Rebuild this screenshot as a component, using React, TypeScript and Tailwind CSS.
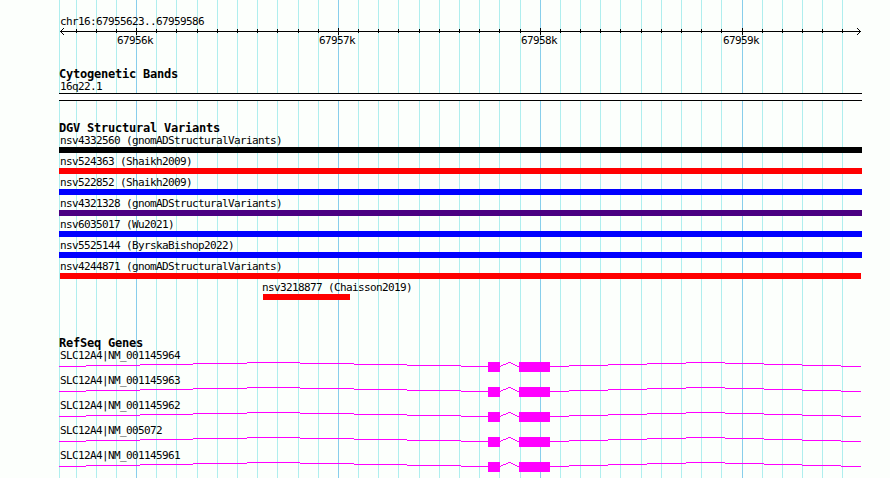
import React from "react";

const MINOR = [59, 76, 96, 116, 156, 176, 197, 217, 237, 257, 277, 298, 318, 358, 378, 398, 419, 439, 459, 479, 499, 520, 560, 580, 600, 620, 641, 661, 681, 701, 721, 762, 782, 802, 822, 842];
const MAJOR = [
  { x: 136, label: "67956k" },
  { x: 338, label: "67957k" },
  { x: 540, label: "67958k" },
  { x: 742, label: "67959k" },
];

const VARIANTS = [
  { name: "nsv4332560 (gnomADStructuralVariants)", fill: "#000000", start: 59, end: 862, text: 60 },
  { name: "nsv524363 (Shaikh2009)", fill: "#ff0000", start: 59, end: 862, text: 60 },
  { name: "nsv522852 (Shaikh2009)", fill: "#0000ff", start: 59, end: 862, text: 60 },
  { name: "nsv4321328 (gnomADStructuralVariants)", fill: "#4b0082", start: 59, end: 862, text: 60 },
  { name: "nsv6035017 (Wu2021)", fill: "#0000ff", start: 59, end: 862, text: 60 },
  { name: "nsv5525144 (ByrskaBishop2022)", fill: "#0000ff", start: 59, end: 862, text: 60 },
  { name: "nsv4244871 (gnomADStructuralVariants)", fill: "#ff0000", start: 60, end: 861, text: 60 },
  { name: "nsv3218877 (Chaisson2019)", fill: "#ff0000", start: 263, end: 350, text: 262 },
];

const GENES = ["NM_001145964", "NM_001145963", "NM_001145962", "NM_005072", "NM_001145961"];

// Intron segments as [start, end, row], row 0 being the peak of the arc.
const INTRONS = [
  [59, 86, 4], [86, 140, 3], [140, 193, 2], [193, 247, 1], [247, 300, 0],
  [300, 354, 1], [354, 407, 2], [407, 461, 3], [461, 488, 4],
  [500, 501, 4], [501, 503, 3], [503, 506, 2], [506, 508, 1], [508, 511, 0],
  [511, 513, 1], [513, 515, 2], [515, 517, 3], [517, 519, 4],
  [550, 569, 4], [569, 608, 3], [608, 647, 2], [647, 686, 1], [686, 725, 0],
  [725, 764, 1], [764, 802, 2], [802, 841, 3], [841, 861, 4],
];

const MONO = "font-['DejaVu_Sans_Mono',monospace] whitespace-pre text-black";

function Label({ x = 60, children }: { x?: number; children: React.ReactNode }) {
  return (
    <div className={`${MONO} h-3 text-[11px] leading-[14px] tracking-[-0.622px]`} style={{ paddingLeft: x }}>
      {children}
    </div>
  );
}

function Heading({ children }: { children: React.ReactNode }) {
  return (
    <h2 className={`${MONO} h-3 pl-[59px] text-[12px] font-bold leading-[13px] tracking-[-0.224px]`}>
      {children}
    </h2>
  );
}

function Grid() {
  return (
    <svg className="absolute inset-0" width="890" height="478" shapeRendering="crispEdges">
      {MINOR.map((x) => <rect key={x} x={x} y="0" width="1" height="478" fill="#afeeee" />)}
      {MAJOR.map(({ x }) => <rect key={x} x={x} y="0" width="1" height="478" fill="#87ceeb" />)}
    </svg>
  );
}

function Axis() {
  return (
    <svg className="block" width="890" height="8" shapeRendering="crispEdges">
      <rect x="60" y="4" width="801" height="1" />
      {MINOR.slice(1).map((x) => <rect key={x} x={x} y="2" width="1" height="4" />)}
      {MAJOR.map(({ x }) => <rect key={x} x={x} y="1" width="1" height="7" />)}
      {[1, 2, 3].map((d) => (
        <g key={d}>
          <rect x={60 + d} y={4 - d} width="1" height="1" />
          <rect x={60 + d} y={4 + d} width="1" height="1" />
          <rect x={860 - d} y={4 - d} width="1" height="1" />
          <rect x={860 - d} y={4 + d} width="1" height="1" />
        </g>
      ))}
    </svg>
  );
}

export default function App() {
  return (
    <main className="relative h-[478px] w-[890px] overflow-hidden bg-[#fcfffc]">
      <Grid />
      <div className="relative flex flex-col">
        <section className="pt-[15px]">
          <Label>chr16:67955623..67959586</Label>
          <Axis />
          <div className="-mt-px flex pl-[117px]">
            {MAJOR.map(({ label }) => (
              <div key={label} className="w-[202px] shrink-0">
                <Label x={0}>{label}</Label>
              </div>
            ))}
          </div>
        </section>

        <section className="pt-[22px]">
          <Heading>Cytogenetic Bands</Heading>
          <Label>16q22.1</Label>
          <div className="ml-[59px] mt-px h-2 w-[803px] border-y border-black bg-white" />
        </section>

        <section className="pt-[21px]">
          <Heading>DGV Structural Variants</Heading>
          {VARIANTS.map((v) => (
            <div key={v.name} className="h-[21px]">
              <Label x={v.text}>{v.name}</Label>
              <div
                className="mt-px h-1.5"
                style={{ marginLeft: v.start, width: v.end - v.start, backgroundColor: v.fill }}
              />
            </div>
          ))}
        </section>

        <section className="pt-[35px]">
          <Heading>RefSeq Genes</Heading>
          {GENES.map((gene) => (
            <div key={gene} className="h-[25px]">
              <Label>SLC12A4|{gene}</Label>
              <svg className="block" width="890" height="12" shapeRendering="crispEdges" fill="#ff00ff">
                {INTRONS.map(([a, b, row]) => <rect key={a} x={a} y={row + 1} width={b - a} height="1" />)}
                <rect x="488" y="1" width="12" height="10" />
                <rect x="519" y="1" width="31" height="10" />
              </svg>
            </div>
          ))}
        </section>
      </div>
    </main>
  );
}
